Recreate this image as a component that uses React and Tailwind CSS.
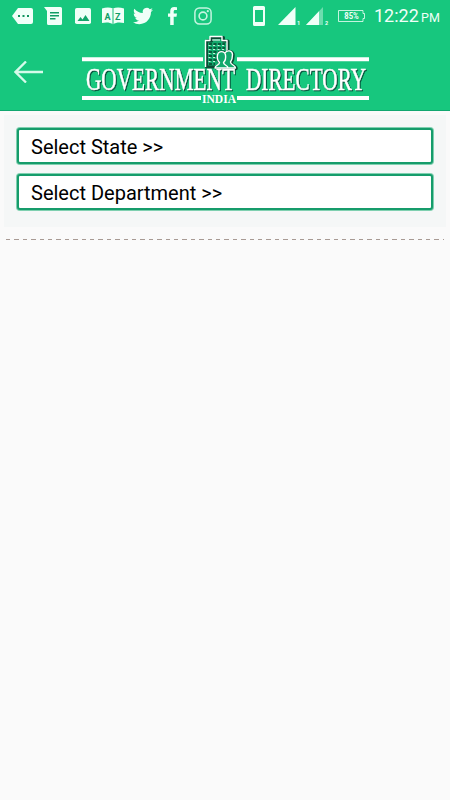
import { useState } from 'react';

const fields = [
    { id: 'state', label: 'Select State >>' },
    { id: 'department', label: 'Select Department >>' }
];

function StatusBar() {
    return (
        <div className="flex h-[31px] items-center text-[#f0fff8]">
            <svg className="ml-3 h-4 w-[21px] shrink-0" viewBox="0 0 21 16">
                <path d="M6 0h13a2 2 0 0 1 2 2v12a2 2 0 0 1-2 2H6L0 8z" fill="currentColor" />
                <path d="M6 7h2v2H6zM10.5 7h2v2h-2zM15 7h2v2h-2z" fill="#10935f" />
            </svg>
            <svg className="ml-[11px] h-[18px] w-[18px] shrink-0" viewBox="0 0 18 18">
                <path d="M0 0h16.500A1.500 1.500 0 0 1 18 1.500v15a1.500 1.500 0 0 1-1.500 1.500h-12A1.500 1.500 0 0 1 3 16.500V4z" fill="currentColor" />
                <path d="M6 5.700h9M6 8.700h9M6 11.700h5.500" stroke="#109d65" strokeWidth="1.500" />
            </svg>
            <svg className="ml-[13px] h-4 w-4 shrink-0" viewBox="0 0 16 16">
                <rect width="16" height="16" rx="1.800" fill="currentColor" />
                <path d="M2.500 13l3-4 2 2.500L10.500 7l4 6z" fill="#12a66b" />
            </svg>
            <svg className="ml-[11px] h-[18px] w-[22px] shrink-0" viewBox="0 0 22 18">
                <path d="M0 1.500C4 .3 8 .3 11 1.500c3-1.200 7-1.200 11 0V16c-4-.8-8-.8-11 1.300C8 15.200 4 15.200 0 16z" fill="currentColor" />
                <path d="M11 1.500v15.500" stroke="#14bd78" strokeWidth="1" />
                <text x="2.500" y="12.500" fontSize="9" fontWeight="700" fontFamily="Roboto, sans-serif" fill="#109d65">A</text>
                <text x="13" y="12.500" fontSize="9" fontWeight="700" fontFamily="Roboto, sans-serif" fill="#109d65">Z</text>
            </svg>
            <svg className="ml-[9px] h-5 w-5 shrink-0" viewBox="0 0 24 24" fill="currentColor">
                <path d="M23.950 4.570a10 10 0 0 1-2.820.770 4.960 4.960 0 0 0 2.160-2.720c-.95.550-2 .95-3.130 1.180a4.920 4.920 0 0 0-8.380 4.480C7.690 8.090 4.070 6.130 1.640 3.160a4.820 4.820 0 0 0-.67 2.480c0 1.710.87 3.210 2.190 4.100a4.900 4.900 0 0 1-2.230-.62v.060a4.920 4.920 0 0 0 3.950 4.830 5 5 0 0 1-2.210.080 4.940 4.940 0 0 0 4.600 3.420A9.870 9.870 0 0 1 0 19.540a13.990 13.990 0 0 0 7.550 2.210c9.050 0 14-7.500 14-13.980 0-.21 0-.42-.020-.63a9.940 9.940 0 0 0 2.420-2.570z" />
            </svg>
            <svg className="ml-[15px] h-[18px] w-[9px] shrink-0" viewBox="0 0 9 18" fill="currentColor">
                <path d="M2.200 18V9.800H0V6.600h2.200V4.200C2.200 1.500 3.700 0 6.200 0L9 .2V3H7.300C6 3 5.700 3.600 5.700 4.600v2H9l-.5 3.200H5.700V18z" />
            </svg>
            <svg className="ml-[17px] h-[18px] w-[18px] shrink-0" viewBox="0 0 18 18" fill="none" stroke="#c5f5e0">
                <rect x=".9" y=".9" width="16.200" height="16.200" rx="4.500" strokeWidth="1.500" />
                <circle cx="9" cy="9" r="3.900" strokeWidth="1.600" />
                <circle cx="13.800" cy="4.200" r="1.100" fill="#c5f5e0" stroke="none" />
            </svg>
            <svg className="ml-[41px] h-5 w-3 shrink-0" viewBox="0 0 12 20">
                <path fillRule="evenodd" d="M1.500 0h9A1.500 1.500 0 0 1 12 1.500v17a1.500 1.500 0 0 1-1.500 1.500h-9A1.500 1.500 0 0 1 0 18.500v-17A1.500 1.500 0 0 1 1.500 0zM2 4v12h8V4z" fill="currentColor" />
            </svg>
            <svg className="ml-[13px] h-[18px] w-[22px] shrink-0" viewBox="0 0 22 18" fill="currentColor">
                <path d="M0 18L17.500 0v18z" />
                <text x="19" y="17.500" fontSize="5.500" fontWeight="700" fontFamily="Roboto, sans-serif">1</text>
            </svg>
            <svg className="ml-[6px] h-[18px] w-[23px] shrink-0" viewBox="0 0 23 18" fill="currentColor">
                <path d="M0 18L17 0v18z" opacity=".4" />
                <path d="M0 18L13 4.200V18z" />
                <text x="19" y="17.500" fontSize="5.500" fontWeight="700" fontFamily="Roboto, sans-serif">2</text>
            </svg>
            <svg className="ml-[9px] h-3 w-[27px] shrink-0" viewBox="0 0 27 12">
                <path d="M.5.500h24.500v3h1.500v5H25v3H.5z" fill="none" stroke="currentColor" strokeOpacity=".8" />
                <text x="6.300" y="9" fontSize="8.500" fontWeight="700" fontFamily="Roboto, sans-serif" fill="currentColor" textLength="14.500" lengthAdjust="spacingAndGlyphs">85%</text>
            </svg>
            <div className="ml-[9px] flex items-baseline whitespace-nowrap leading-none">
                <span className="w-[47px] text-[18px]">12:22</span>
                <span className="text-[12.500px]">PM</span>
            </div>
        </div>
    );
}

function Logo() {
    return (
        <svg className="ml-[37px] h-[70px] w-[294px] overflow-visible" viewBox="-1 0 294 70">
            {/* office building with two people in front */}
            <g strokeLinejoin="round">
                <path d="M125.500 32V6h5V2.500h12V6h4.500v26z" fill="#12a96c" stroke="#0a4d35" strokeWidth="3" />
                <path d="M124.500 32V5.500h4.500V1.500h12v4h5V19" fill="none" stroke="#fff" strokeWidth="1.400" />
                <path d="M128 9h16M128 13h16M128 17h16M128 21h9M128 25h8M128 29h6" stroke="#0a5a3d" strokeWidth="1.800" strokeDasharray="3 1.500" />
                <path d="M131 5h8" stroke="#fff" strokeWidth="1" />
                <path d="M127.500 10.500h16M127.500 14.500h16M127.500 18.500h9M127.500 22.500h8M127.500 26.500h8" stroke="#d8fbea" strokeWidth=".9" strokeDasharray="2 2.500" />
                <path d="M136 33.500c0-3 3.500-2.500 3.500-5.500-2-2-2.500-5-2-7.500 1-4.500 6-4.500 7 0 1.500-5.500 8-4.500 7.500 0 0 3-.5 5-2 7.500 0 2.500 5 2.500 5 5.500z" fill="#12a96c" stroke="#0a4d35" strokeWidth="3.500" />
                <path d="M134 33c0-3 4.500-2.500 4.500-5.500-2-2-2.500-5-2-7.500 1-4.500 7-4.500 8 0 .5 3 0 5.500-2 7.500 0 3 4.500 2.500 4.500 5.500zM144 18c2-3.500 7.500-2.500 7.500 1.500 0 3-.5 5.500-2 7.500 0 3 5 3 5 6h-7.500" fill="#12a96c" stroke="#fff" strokeWidth="1.400" />
            </g>
            <path d="M1 22.300h121v4H1zM156 22.300h132v4H156zM1 61h119v4H1zM156 61h132v4H156z" fill="#fff" />
            <g fill="#fff" stroke="#fff" strokeWidth=".5" fontSize="31" fontFamily="'Liberation Serif', serif" className="[filter:drop-shadow(1px_1px_0.4px_#07503a)]">
                <text x="5" y="54.500" textLength="149" lengthAdjust="spacingAndGlyphs">GOVERNMENT</text>
                <text x="165" y="54.500" textLength="120" lengthAdjust="spacingAndGlyphs">DIRECTORY</text>
            </g>
            <text x="121" y="67.500" fill="#fff" fontSize="13.500" fontWeight="700" fontFamily="'Liberation Serif', serif" textLength="34" lengthAdjust="spacingAndGlyphs">INDIA</text>
        </svg>
    );
}

export default function App() {
    const [selected, setSelected] = useState(null);

    return (
        <div className="min-h-screen bg-[#fafafa] font-['Roboto',sans-serif]">
            <header className="h-[111px] border-b border-[#12a770] bg-[#17c77e]">
                <StatusBar />
                <div className="flex items-start pt-[4px]">
                    <button aria-label="Back" className="mt-[26px] ml-[14px] text-[#d5fbea]">
                        <svg className="h-[22px] w-[29px]" viewBox="0 0 29 22" fill="none" stroke="currentColor" strokeWidth="2.300">
                            <path d="M29 11H2M12 .5L1.500 11 12 21.500" />
                        </svg>
                    </button>
                    <Logo />
                </div>
            </header>

            <main>
                <div className="mx-1 mt-1 flex h-[112px] flex-col gap-[10px] bg-[#f5f7f7] px-[13px] pt-[13px]">
                    {fields.map((field) => (
                        <button
                            key={field.id}
                            onClick={() => setSelected(field.id)}
                            aria-pressed={selected === field.id}
                            className="h-[36px] shrink-0 rounded-[3px] border-2 border-[#169c6b] bg-white pl-3 text-left text-[20px] leading-none text-black shadow-[0_0_0_1px_#7fd0b0]"
                        >
                            <span className="block pt-px">{field.label}</span>
                        </button>
                    ))}
                </div>
                <div className="mx-[6px] mt-[12px] h-px bg-[repeating-linear-gradient(90deg,#a89a94_0px,#a89a94_4.500px,transparent_4.500px,transparent_8.400px)]" />
            </main>
        </div>
    );
}
